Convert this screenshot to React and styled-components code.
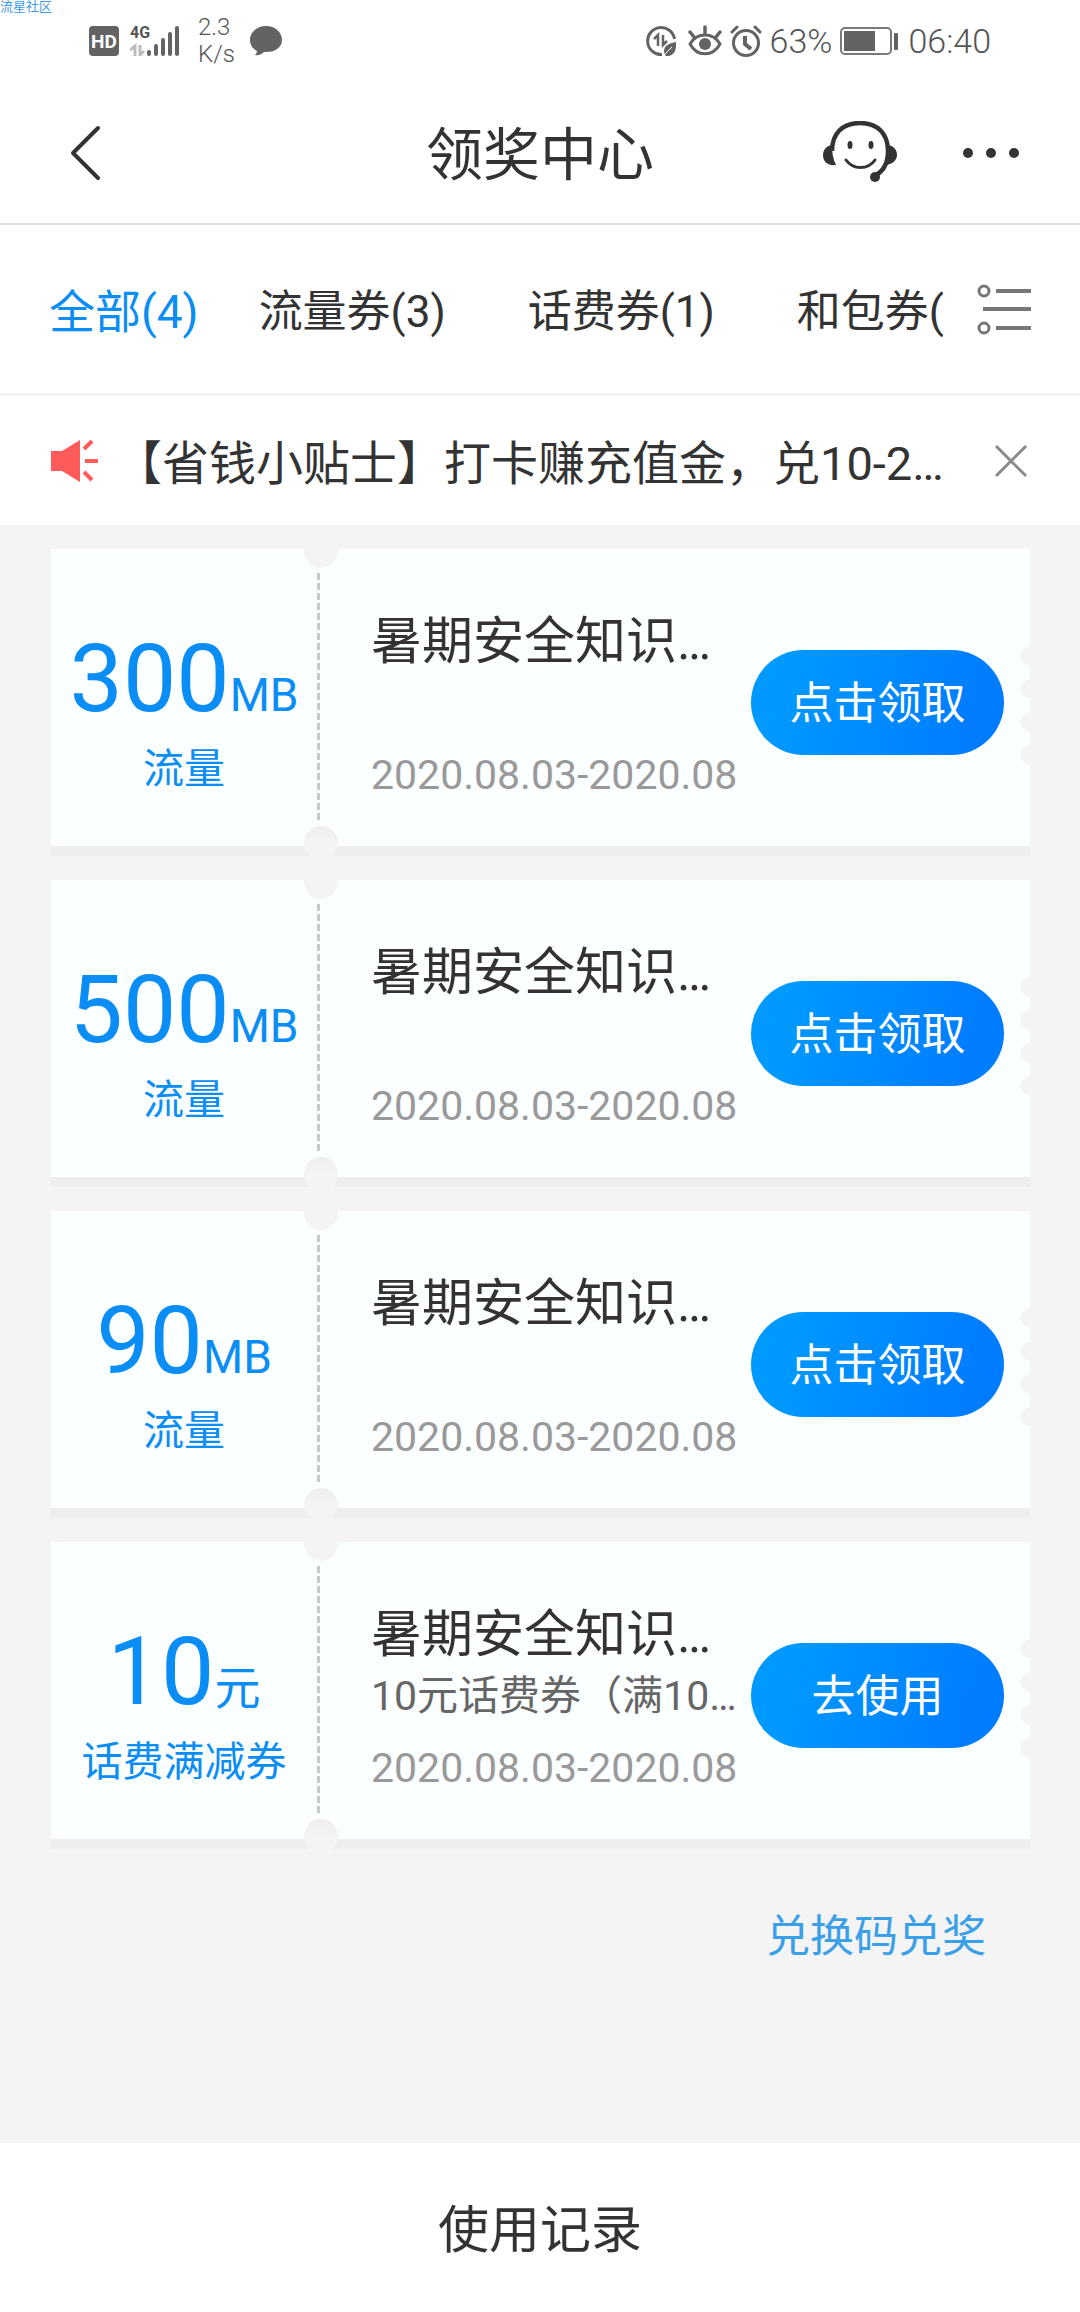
import React, { useState } from "react";
import styled, { createGlobalStyle } from "styled-components";

const coupons = [
  {
    id: 1,
    amount: "300",
    unit: "MB",
    type: "流量",
    title: "暑期安全知识…",
    desc: "",
    date: "2020.08.03-2020.08",
    action: "点击领取",
  },
  {
    id: 2,
    amount: "500",
    unit: "MB",
    type: "流量",
    title: "暑期安全知识…",
    desc: "",
    date: "2020.08.03-2020.08",
    action: "点击领取",
  },
  {
    id: 3,
    amount: "90",
    unit: "MB",
    type: "流量",
    title: "暑期安全知识…",
    desc: "",
    date: "2020.08.03-2020.08",
    action: "点击领取",
  },
  {
    id: 4,
    amount: "10",
    unit: "元",
    type: "话费满减券",
    title: "暑期安全知识…",
    desc: "10元话费券（满10…",
    date: "2020.08.03-2020.08",
    action: "去使用",
  },
];

const tabs = ["全部(4)", "流量券(3)", "话费券(1)", "和包券("];

function StatusBar() {
  return (
    <Status>
      <Watermark>流星社区</Watermark>
      <StatusLeft>
        <HdBadge>HD</HdBadge>
        <Signal>
          <NetworkType>4G</NetworkType>
          <svg width="50" height="30" viewBox="0 0 50 30" fill="#636363">
            <path
              d="M0 24l5-4v10M10 19v10l4-4"
              fill="none"
              stroke="#bdbdbd"
              strokeWidth="3"
            />
            <rect x="17" y="24" width="4" height="6" rx="2" />
            <rect x="24" y="18" width="4" height="12" rx="2" />
            <rect x="31" y="12" width="4" height="18" rx="2" />
            <rect x="38" y="6" width="4" height="24" rx="2" />
            <rect x="45" y="0" width="4" height="30" rx="2" />
          </svg>
        </Signal>
        <Speed>
          <span>2.3</span>
          <span>K/s</span>
        </Speed>
        <svg width="32" height="30" viewBox="0 0 32 30" fill="#636363">
          <path d="M16 0C7 0 0 6 0 14c0 5 3 9 7 11 0 2-1 3-2 4 3 1 7-1 9-3 11 1 18-5 18-12C32 6 25 0 16 0z" />
        </svg>
      </StatusLeft>
      <StatusRight>
        <svg width="34" height="32" viewBox="0 0 34 32" fill="none">
          <path
            d="M16 29.500A13.500 13.500 0 1 1 28.500 14"
            stroke="#636363"
            strokeWidth="3"
          />
          <path
            d="M8 14l4-4v11M17 10v10l4-4"
            stroke="#636363"
            strokeWidth="2.500"
          />
          <path d="M30 17c-7 1-12 4-12 9 0 2 1 4 2 5 7 1 11-5 10-14z" fill="#636363" />
          <path d="M17 31l9-9" stroke="#fff" strokeWidth="1" />
        </svg>
        <svg width="34" height="32" viewBox="0 0 34 32" fill="none">
          <path
            d="M2 19C9 7 25 7 32 19C25 32 9 32 2 19z"
            stroke="#636363"
            strokeWidth="3"
          />
          <circle cx="17" cy="19" r="6" fill="#636363" />
          <path
            d="M17 8V2M6 12L2 7M28 12l4-5"
            stroke="#636363"
            strokeWidth="3.500"
            strokeLinecap="round"
          />
        </svg>
        <svg width="32" height="32" viewBox="0 0 32 32" fill="none">
          <circle cx="16" cy="18" r="12.500" stroke="#636363" strokeWidth="3" />
          <path
            d="M2 7l5-5M30 7l-5-5"
            stroke="#636363"
            strokeWidth="3"
            strokeLinecap="round"
          />
          <path d="M15 11v8l6 5" stroke="#636363" strokeWidth="4" />
        </svg>
        <StatusText>63%</StatusText>
        <svg width="60" height="28" viewBox="0 0 60 28">
          <rect
            x="1"
            y="1"
            width="50"
            height="26"
            rx="4"
            fill="none"
            stroke="#7a7a7a"
            strokeWidth="2"
          />
          <rect x="4" y="4" width="31" height="20" fill="#636363" />
          <rect x="54" y="6" width="4" height="17" rx="1" fill="#636363" />
        </svg>
        <StatusText>06:40</StatusText>
      </StatusRight>
    </Status>
  );
}

function Coupon({ coupon }) {
  return (
    <Card>
      <Stub>
        <Amount>
          {coupon.amount}
          <Unit>{coupon.unit}</Unit>
        </Amount>
        <Type>{coupon.type}</Type>
      </Stub>
      <Divider />
      <Info>
        <CouponTitle>{coupon.title}</CouponTitle>
        <Desc>{coupon.desc}</Desc>
        <DateRange>{coupon.date}</DateRange>
      </Info>
      <ActionButton type="button">{coupon.action}</ActionButton>
      <Teeth />
    </Card>
  );
}

function App() {
  const [active, setActive] = useState(0);
  const [showTip, setShowTip] = useState(true);

  return (
    <Page>
      <GlobalStyle />
      <StatusBar />
      <Header>
        <HeaderSide>
          <IconButton type="button" aria-label="返回">
            <svg width="50" height="56" viewBox="-8 0 50 56" fill="none">
              <path
                d="M30 3L5 28l25 25"
                stroke="#333"
                strokeWidth="4"
                strokeLinecap="round"
                strokeLinejoin="round"
              />
            </svg>
          </IconButton>
        </HeaderSide>
        <HeaderTitle>领奖中心</HeaderTitle>
        <HeaderSide $end>
          <IconButton type="button" aria-label="客服">
            <svg width="76" height="64" viewBox="0 3 76 64" fill="none">
              <path
                d="M10 32C10 14 21 4 38 4s28 10 28 28c0 13-5 21-14 25"
                stroke="#333"
                strokeWidth="4.500"
                transform="translate(0 1)"
              />
              <path
                d="M10 27c-6 1-9 5-9 10 0 7 5 11 13 10-3-6-4-12-4-20zM66 27c6 1 9 5 9 10 0 5-4 9-11 10 2-6 2-12 2-20z"
                fill="#333"
              />
              <circle cx="53" cy="59" r="5" fill="#333" />
              <ellipse cx="28" cy="27" rx="2.500" ry="4" fill="#333" />
              <ellipse cx="49" cy="27" rx="2.500" ry="4" fill="#333" />
              <path
                d="M24 42c7 10 22 10 29 0"
                stroke="#333"
                strokeWidth="3"
                strokeLinecap="round"
              />
            </svg>
          </IconButton>
          <IconButton type="button" aria-label="更多">
            <svg width="58" height="12" viewBox="0 0 58 12" fill="#333">
              <circle cx="6" cy="6" r="5" />
              <circle cx="29" cy="6" r="5" />
              <circle cx="52" cy="6" r="5" />
            </svg>
          </IconButton>
        </HeaderSide>
      </Header>

      <TabBar>
        <TabList>
          {tabs.map((tab, i) => (
            <Tab
              key={tab}
              type="button"
              $active={i === active}
              onClick={() => setActive(i)}
            >
              {tab}
            </Tab>
          ))}
        </TabList>
        <IconButton type="button" aria-label="分类">
          <svg width="56" height="52" viewBox="0 0 56 52" fill="none" stroke="#777">
            <circle cx="8" cy="8" r="5" strokeWidth="3" />
            <circle cx="8" cy="45" r="5" strokeWidth="3" />
            <path d="M20 8h35M7 26h48M20 45h35" strokeWidth="4" />
          </svg>
        </IconButton>
      </TabBar>

      {showTip && (
        <Notice>
          <svg width="48" height="42" viewBox="0 0 48 42">
            <path d="M0 11h11L29 0v42L11 31H0z" fill="#ff5b5b" />
            <path
              d="M33 9l8-8M34 21h13M33 32l8 8"
              stroke="#ff5b5b"
              strokeWidth="4"
              fill="none"
            />
          </svg>
          <NoticeText>【省钱小贴士】打卡赚充值金，兑10-2…</NoticeText>
          <IconButton
            type="button"
            aria-label="关闭"
            onClick={() => setShowTip(false)}
          >
            <svg width="34" height="34" viewBox="0 0 34 34" fill="none">
              <path d="M2 2l30 30M32 2L2 32" stroke="#8a8a8a" strokeWidth="3" />
            </svg>
          </IconButton>
        </Notice>
      )}

      <List>
        {coupons.map((coupon) => (
          <Coupon key={coupon.id} coupon={coupon} />
        ))}
        <RedeemLink href="#redeem">兑换码兑奖</RedeemLink>
      </List>

      <Footer type="button">使用记录</Footer>
    </Page>
  );
}

export default App;

const GlobalStyle = createGlobalStyle`
  * {
    box-sizing: border-box;
  }
  body {
    margin: 0;
    background: #f4f4f4;
    color: #333;
    font-family: Roboto, "Noto Sans CJK SC", sans-serif;
  }
  button {
    margin: 0;
    padding: 0;
    border: none;
    background: none;
    color: inherit;
    font-family: inherit;
    cursor: pointer;
  }
  svg {
    display: block;
    flex-shrink: 0;
  }
`;

const Page = styled.div`
  display: flex;
  flex-direction: column;
  min-height: 100vh;
`;

const Status = styled.div`
  position: relative;
  display: flex;
  align-items: center;
  justify-content: space-between;
  height: 82px;
  padding: 0 89px;
  background: #fff;
  color: #555;
`;

const Watermark = styled.span`
  position: absolute;
  top: 0;
  left: 0;
  color: #3f9bea;
  font-size: 13px;
  line-height: 13px;
`;

const StatusLeft = styled.div`
  display: flex;
  align-items: center;
  gap: 18px;
`;

const HdBadge = styled.span`
  width: 30px;
  height: 30px;
  margin-right: -7px;
  border-radius: 4px;
  background: #636363;
  color: #fff;
  font-size: 19px;
  font-weight: 700;
  line-height: 31px;
  text-align: center;
`;

const Signal = styled.div`
  position: relative;
`;

const NetworkType = styled.span`
  position: absolute;
  top: -2px;
  left: 0;
  font-size: 16px;
  font-weight: 700;
  line-height: 18px;
`;

const Speed = styled.div`
  display: flex;
  flex-direction: column;
  width: 34px;
  font-size: 24px;
  font-weight: 300;
  line-height: 27px;
`;

const StatusRight = styled.div`
  display: flex;
  align-items: center;
  gap: 8px;
`;

const StatusText = styled.span`
  font-size: 34px;
  font-weight: 300;
  line-height: 40px;
`;

const Header = styled.header`
  display: flex;
  align-items: center;
  height: 143px;
  padding: 0 60px;
  border-bottom: 2px solid #e0e0e0;
  background: #fff;
`;

const HeaderSide = styled.div`
  display: flex;
  flex: 1;
  align-items: center;
  justify-content: ${(props) => (props.$end ? "flex-end" : "flex-start")};
  gap: 64px;
`;

const HeaderTitle = styled.h1`
  margin: 0;
  padding-top: 6px;
  font-size: 57px;
  font-weight: 400;
  line-height: 80px;
`;

const IconButton = styled.button`
  flex-shrink: 0;
`;

const TabBar = styled.nav`
  display: flex;
  align-items: center;
  justify-content: space-between;
  gap: 24px;
  height: 171px;
  padding: 0 48px 0 49px;
  border-bottom: 3px solid #f2f2f2;
  background: #fff;
`;

const TabList = styled.div`
  display: flex;
  flex: 1;
  min-width: 0;
  padding-top: 6px;
  overflow: hidden;
`;

const Tab = styled.button`
  flex-shrink: 0;
  margin-right: ${(props) => (props.$active ? 60 : 82)}px;
  color: ${(props) => (props.$active ? "#0a8df5" : "#333")};
  font-size: ${(props) => (props.$active ? 46 : 44)}px;
  line-height: 64px;

  &:last-child {
    margin-right: 0;
  }
`;

const Notice = styled.section`
  display: flex;
  align-items: center;
  height: 129px;
  padding: 0 52px 0 51px;
  background: #fff;
`;

const NoticeText = styled.p`
  flex: 1;
  min-width: 0;
  margin: 0 32px 0 16px;
  padding-top: 6px;
  overflow: hidden;
  font-size: 47px;
  line-height: 64px;
  white-space: nowrap;
`;

const List = styled.main`
  display: flex;
  flex: 1;
  flex-direction: column;
  gap: 34px;
  padding: 24px 50px 160px 51px;
`;

const Card = styled.article`
  position: relative;
  display: flex;
  min-height: 297px;
  padding-right: 26px;
  background: #fcffff;
  box-shadow: 0 10px 0 #eeeeee;
`;

const Stub = styled.div`
  display: flex;
  flex-direction: column;
  flex-shrink: 0;
  align-items: center;
  width: 266px;
  padding-top: 82px;
  color: #0a8df5;
`;

const Amount = styled.div`
  height: 96px;
  font-size: 95px;
  line-height: 96px;
  white-space: nowrap;
`;

const Unit = styled.span`
  font-size: 46px;
  line-height: 46px;
`;

const Type = styled.div`
  margin-top: 12px;
  font-size: 41px;
  line-height: 60px;
`;

/* dashed tear line with a round notch at each end */
const Divider = styled.div`
  position: relative;
  flex-shrink: 0;
  width: 3px;
  margin: 24px 0;
  background: repeating-linear-gradient(#c6c9c9 0 7px, transparent 7px 10px);

  &::before,
  &::after {
    content: "";
    position: absolute;
    left: -13px;
    width: 34px;
    height: 34px;
    border-radius: 50%;
    background: #f4f4f4;
  }
  &::before {
    top: -39px;
  }
  &::after {
    bottom: -38px;
    background: linear-gradient(#eeeeee, #f4f4f4 50%);
  }
`;

const Info = styled.div`
  flex: 1;
  min-width: 0;
  padding: 62px 0 29px 51px;
  white-space: nowrap;
`;

const CouponTitle = styled.h2`
  margin: 0;
  font-size: 51px;
  font-weight: 400;
  line-height: 62px;
`;

const Desc = styled.p`
  height: 60px;
  margin: 0;
  color: #666;
  font-size: 41px;
  line-height: 60px;
`;

const DateRange = styled.p`
  margin: 0;
  color: #999;
  font-size: 41px;
  line-height: 84px;
`;

const ActionButton = styled.button`
  flex-shrink: 0;
  align-self: center;
  width: 253px;
  height: 105px;
  margin-top: 10px;
  margin-left: 12px;
  padding-top: 2px;
  border-radius: 53px;
  background: linear-gradient(105deg, #0099ff 15%, #007dff 85%);
  color: #fff;
  font-size: 44px;
  line-height: 64px;
`;

/* half-round perforations on the right edge */
const Teeth = styled.div`
  position: absolute;
  top: 90px;
  right: 0;
  width: 10px;
  height: 132px;
  background: radial-gradient(circle at 10px 17px, #f4f4f4 9px, transparent 10px)
    0 0 / 10px 33px repeat-y;
`;

const RedeemLink = styled.a`
  align-self: flex-end;
  margin: 32px 44px 0 0;
  color: #3a9fe9;
  font-size: 44px;
  line-height: 64px;
  text-decoration: none;
`;

const Footer = styled.button`
  height: 169px;
  padding-top: 6px;
  background: #fff;
  font-size: 51px;
  line-height: 72px;
`;
